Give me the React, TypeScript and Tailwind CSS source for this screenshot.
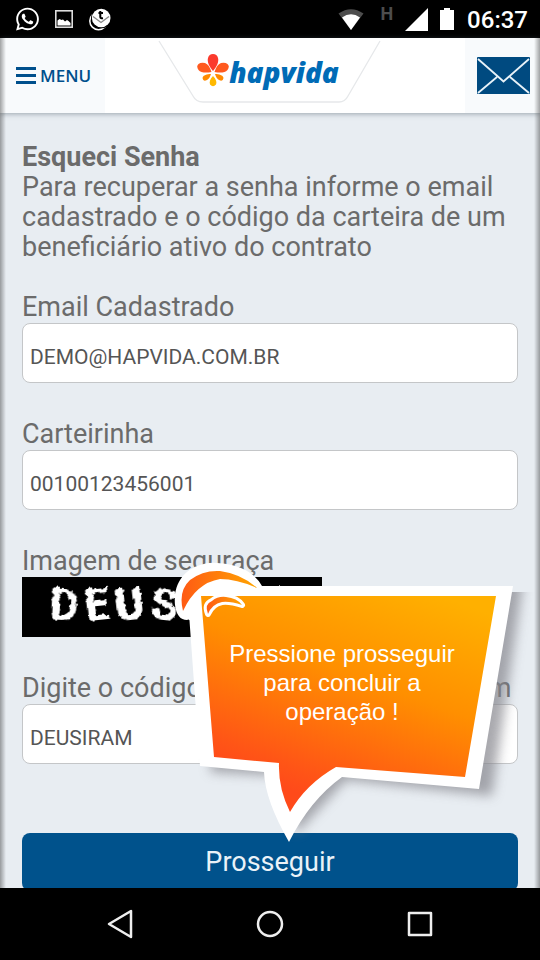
import { FaWhatsapp } from 'react-icons/fa';

const FIELDS = [
    { id: 'email', label: 'Email Cadastrado', value: 'DEMO@HAPVIDA.COM.BR' },
    { id: 'carteirinha', label: 'Carteirinha', value: '00100123456001' },
];

const CAPTCHA = [
    { char: 'D', style: 'rotate-3' },
    { char: 'E', style: '-rotate-6' },
    { char: 'U', style: '-rotate-6 font-black' },
    { char: 'S', style: 'rotate-6' },
    { char: 'I', style: '-rotate-3' },
    { char: 'R', style: 'rotate-3' },
    { char: 'A', style: '-rotate-6' },
    { char: 'M', style: 'rotate-3' },
];

const inputClass = 'h-[60px] rounded-lg border border-[#c4c6c8] bg-white px-[7px] pt-2 text-[21px] text-[#555]';

function StatusBar() {
    return (
        <div className="flex h-[38px] shrink-0 items-center bg-black pl-4 pr-3 text-white">
            <FaWhatsapp className="h-[26px] w-[23px]" />
            <svg className="ml-4 h-[18px] w-[18px]" viewBox="0 0 18 18">
                <rect x="0.8" y="0.8" width="16.4" height="16.4" fill="none" stroke="#ddd" strokeWidth="1.6" />
                <path d="M2.500 15.500V10.500l2-1.500 2 1 1.500-0.500 2 2 2-1.500 1.500 1 2 2v2.500z" fill="#fff" />
            </svg>
            <svg className="ml-4 h-[23px] w-[22px]" viewBox="0 0 22 23">
                <circle cx="9.500" cy="13" r="8.700" fill="none" stroke="#fff" strokeWidth="1.500" />
                <circle cx="12.200" cy="10" r="10.300" fill="#000" />
                <circle cx="12.200" cy="10" r="9.300" fill="#fff" />
                <path d="M4 8.500l8 6 8-6" fill="none" stroke="#888" strokeWidth="1.300" />
                <path d="M11.300 3v6q0 1.600 2.700 1.200M9.500 5h4.500" fill="none" stroke="#000" strokeWidth="2" />
            </svg>
            <div className="flex-1" />
            <svg className="h-[21px] w-[26px]" viewBox="0 0 26 21">
                <path d="M13 21L0.500 4.500Q13-4 25.500 4.500z" fill="#4d4d4d" />
                <path d="M13 21L4 8.500Q13 2 22 8.500z" fill="#fff" />
            </svg>
            <span className="ml-4 pb-2.5 font-[Roboto] text-lg font-bold text-[#4d4d4d]">H</span>
            <svg className="ml-3 h-[23px] w-[23px]" viewBox="0 0 23 23">
                <path d="M23 0v23H0z" fill="#fff" />
            </svg>
            <svg className="ml-3 h-[22px] w-[15px]" viewBox="0 0 15 22">
                <path d="M4 0h6v2h4v20H0V2h4z" fill="#fff" />
            </svg>
            <span className="ml-3 pt-0.5 font-[Roboto] text-2xl font-medium">06:37</span>
        </div>
    );
}

function Header() {
    return (
        <header className="relative z-10 grid h-[75px] shrink-0 grid-cols-[105px_1fr_105px] bg-white shadow-[0_1px_5px_rgba(80,95,105,0.5)]">
            <button className="flex items-center gap-1 bg-[#f8fafc] pl-4 text-[#004f8c]">
                <svg className="h-[17px] w-5" viewBox="0 0 20 17">
                    <path d="M0 1.500h20M0 8.500h20M0 15.500h20" stroke="currentColor" strokeWidth="3" />
                </svg>
                <span className="font-['Open_Sans'] text-[17px] font-semibold">MENU</span>
            </button>
            <div className="relative flex justify-center">
                <svg className="h-[66px] w-[224px]" viewBox="0 0 224 66">
                    <path d="M1 3L35 58Q38 64 45 64H181Q187 64 190 58L222 3" fill="none" stroke="#e6e8ea" strokeWidth="1.300" />
                </svg>
                <div className="absolute inset-0 flex items-start justify-center pt-4">
                    <svg className="h-[34px] w-8 shrink-0" viewBox="0 0 32 34">
                        <path d="M16 17C12 12 10 8 11 4Q12 0 16 0T21 4C22 8 20 12 16 17z" fill="#fb3a2d" />
                        <path d="M14.500 18C9 19 4 19 1.500 16Q-1 12 1.500 10T8 9C11 10 13 13 14.500 18z" fill="#ff5a1f" />
                        <path d="M17.500 18C23 19 28 19 30.500 16Q33 12 30.500 10T24 9C21 10 19 13 17.500 18z" fill="#ff5a1f" />
                        <path d="M14 20C10 20 6 21 5.500 24Q6 28 10 26C12 25 13 23 14 20z" fill="#ff8a00" />
                        <path d="M18 20C22 20 26 21 26.500 24Q26 28 22 26C20 25 19 23 18 20z" fill="#ff8a00" />
                        <path d="M16 22C13 25 12 28 13 30.500Q16 34 19 30.500C20 28 19 25 16 22z" fill="#ffb900" />
                    </svg>
                    <span className="pr-1 font-['Open_Sans'] text-[28px] font-extrabold italic leading-9 text-[#006bb6]">hapvida</span>
                </div>
            </div>
            <button aria-label="Mensagens" className="flex w-[75px] items-center justify-center justify-self-end bg-[#f8fafc] pl-0.5">
                <svg className="h-[37px] w-[53px]" viewBox="0 0 53 37">
                    <rect width="53" height="37" rx="1" fill="#004a80" />
                    <path d="M1 2L21.500 20L26.500 24.500L31.500 20L52 2M1 36L20 20M52 36L33 20" fill="none" stroke="#e8f2f8" strokeWidth="1.800" />
                </svg>
            </button>
        </header>
    );
}

function Tooltip() {
    return (
        <div className="absolute left-[152px] top-4 w-[366px]">
            <svg className="block h-[284px] w-[366px]" viewBox="0 0 366 284">
                <defs>
                    <linearGradient id="fill" gradientUnits="userSpaceOnUse" x1="240" y1="24" x2="160" y2="244">
                        <stop offset="0" stopColor="#ffb000" />
                        <stop offset="0.450" stopColor="#ff8f00" />
                        <stop offset="0.900" stopColor="#ff5516" />
                        <stop offset="1" stopColor="#ff4a1a" />
                    </linearGradient>
                    <linearGradient id="leaf" x1="0" y1="0" x2="1" y2="0">
                        <stop offset="0" stopColor="#ff5a14" />
                        <stop offset="1" stopColor="#ffa500" />
                    </linearGradient>
                    <filter id="blur" x="-10%" y="-10%" width="120%" height="120%">
                        <feGaussianBlur stdDeviation="6" />
                    </filter>
                    <clipPath id="below">
                        <rect y="30" width="366" height="254" />
                    </clipPath>
                </defs>
                <g clipPath="url(#below)">
                    <path d="M60 0H352L318 234L172 218L122 272L110 214L36 210z" fill="#85858c" opacity="0.700" filter="url(#blur)" />
                </g>
                <path d="M13 24H339L305 227L168 215Q136 238 115 280Q91 238 90 210L26 204z" fill="#fff" />
                <path d="M1 43C-1 22 10 8 26 3Q35 0 43 1Q76 3 88 24L60 40L13 58Q3 58 1 43z" fill="#fff" />
                <path d="M27 34H322L291 215L162 205Q132 222 116 250Q104 226 105 201L40 195z" fill="url(#fill)" />
                <path d="M9 49Q4 29 16 18Q29 8 46 9Q68 12 83 26Q63 17 46 17Q22 21 9 49z" fill="url(#leaf)" />
                <path
                    d="M34 52Q30 42 38 39Q44 34 52 35Q63 36 68 43Q56 39 48 40Q38 42 34 52z"
                    fill="url(#leaf)"
                    stroke="#fff"
                    strokeWidth="6"
                    strokeLinejoin="round"
                    style={{ paintOrder: 'stroke' }}
                />
            </svg>
            <p className="absolute left-[43px] top-[77px] w-[250px] text-center font-['Liberation_Sans'] text-2xl leading-[29px] text-white">
                Pressione prosseguir
                <br />
                para concluir a<br />
                operação !
            </p>
        </div>
    );
}

function NavBar() {
    return (
        <nav className="flex h-[72px] shrink-0 items-center justify-center gap-[123px] bg-black text-[#eee]">
            <button aria-label="Voltar">
                <svg className="h-[30px] w-[26px]" viewBox="0 0 26 30" fill="none" stroke="currentColor" strokeWidth="2.500" strokeLinejoin="round">
                    <path d="M24 2v26L2 15z" />
                </svg>
            </button>
            <button aria-label="Início">
                <svg className="h-[28px] w-[28px]" viewBox="0 0 28 28" fill="none" stroke="currentColor" strokeWidth="2.500">
                    <circle cx="14" cy="14" r="12" />
                </svg>
            </button>
            <button aria-label="Recentes">
                <svg className="h-[26px] w-[26px]" viewBox="0 0 26 26" fill="none" stroke="currentColor" strokeWidth="2.500" strokeLinejoin="round">
                    <rect x="2" y="2" width="22" height="22" />
                </svg>
            </button>
        </nav>
    );
}

export default function App() {
    return (
        <div className="flex h-screen flex-col overflow-hidden bg-[#e8edf2] font-[Roboto]">
            <StatusBar />
            <div className="relative flex min-h-0 flex-1 flex-col">
                <Header />
                <main className="flex-1 overflow-hidden px-[22px] pt-[29px] text-[27px] leading-[30px] text-[#6b6b6b]">
                    <h1 className="font-bold">Esqueci Senha</h1>
                    <p>Para recuperar a senha informe o email cadastrado e o código da carteira de um beneficiário ativo do contrato</p>
                    <form className="mt-[30px] flex flex-col gap-9" onSubmit={(e) => e.preventDefault()}>
                        {FIELDS.map((f) => (
                            <div key={f.id} className="flex flex-col gap-px">
                                <label htmlFor={f.id}>{f.label}</label>
                                <input id={f.id} defaultValue={f.value} className={inputClass} />
                            </div>
                        ))}
                        <div className="relative">
                            <p>Imagem de seguraça</p>
                            <div className="mt-px flex h-[60px] w-[300px] items-start gap-1.5 overflow-hidden bg-black pl-7 pt-1 text-[44px] font-bold leading-[48px] text-white">
                                <svg className="absolute h-0 w-0">
                                    <filter id="rough">
                                        <feTurbulence type="fractalNoise" baseFrequency="0.180" numOctaves="3" result="noise" />
                                        <feDisplacementMap in="SourceGraphic" in2="noise" scale="6" xChannelSelector="R" yChannelSelector="G" />
                                    </filter>
                                </svg>
                                {CAPTCHA.map((c) => (
                                    <span key={c.char} className={`${c.style} [filter:url(#rough)]`}>
                                        {c.char}
                                    </span>
                                ))}
                            </div>
                            <Tooltip />
                        </div>
                        <div className="flex flex-col gap-px">
                            <label htmlFor="codigo" className="whitespace-nowrap">
                                Digite o código de segurança da imagem
                            </label>
                            <input id="codigo" defaultValue="DEUSIRAM" className={inputClass} />
                        </div>
                        <button className="mt-[33px] h-[58px] shrink-0 rounded-lg bg-[#00528c] text-[#eaf2f8]">Prosseguir</button>
                    </form>
                </main>
                {/* Page edge shadows */}
                <div className="pointer-events-none absolute inset-y-0 left-0 z-20 w-[6px] bg-gradient-to-r from-black/35 to-transparent" />
                <div className="pointer-events-none absolute inset-y-0 right-0 z-20 w-[6px] bg-gradient-to-l from-black/35 to-transparent" />
            </div>
            <NavBar />
        </div>
    );
}
